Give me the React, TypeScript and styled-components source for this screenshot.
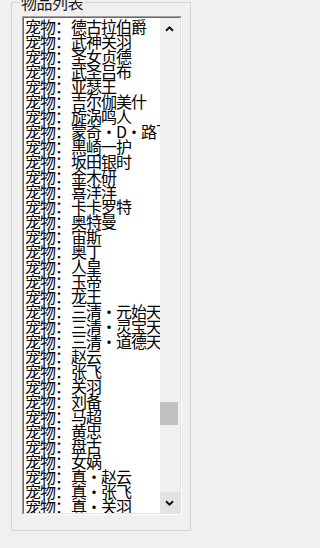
import React from "react";
import styled, { createGlobalStyle } from "styled-components";

const pets = [
  "德古拉伯爵",
  "武神关羽",
  "圣女贞德",
  "武圣吕布",
  "亚瑟王",
  "吉尔伽美什",
  "旋涡鸣人",
  "蒙奇・D・路飞",
  "黑崎一护",
  "坂田银时",
  "金木研",
  "喜洋洋",
  "卡卡罗特",
  "奥特曼",
  "宙斯",
  "奥丁",
  "人皇",
  "玉帝",
  "龙王",
  "三清・元始天尊",
  "三清・灵宝天尊",
  "三清・道德天尊",
  "赵云",
  "张飞",
  "关羽",
  "刘备",
  "马超",
  "黄忠",
  "盘古",
  "女娲",
  "真・赵云",
  "真・张飞",
  "真・关羽",
];

const GlobalStyle = createGlobalStyle`
  html, body {
    margin: 0;
    padding: 0;
    background: #f0f0f0;
    overflow: hidden;
  }
  body {
    font-family: "Noto Sans CJK SC", "Liberation Sans", sans-serif;
  }
`;

const Page = styled.div`
  width: 200px;
  height: 548px;
  padding-left: 11px;
  box-sizing: border-box;
`;

const Group = styled.fieldset`
  box-sizing: border-box;
  width: 180px;
  margin: -5px 0 0 0;
  padding: 6px 8px 15px 10px;
  border: 1px solid #d5d5d5;
  min-width: 0;
`;

const Title = styled.legend`
  margin-left: -2px;
  padding: 0 2px 0 1px;
  font-size: 16px;
  letter-spacing: -0.5px;
  line-height: 15px;
  color: #1a1a1a;
  background: #f0f0f0;
`;

const ListBox = styled.div`
  display: flex;
  width: 160px;
  height: 499px;
  box-sizing: border-box;
  border-style: solid;
  border-width: 1px;
  border-color: #a0a0a0 #ffffff #ffffff #a0a0a0;
  background: #ffffff;
`;

const Inner = styled.div`
  display: flex;
  flex: 1;
  min-width: 0;
  border-style: solid;
  border-width: 1px;
  border-color: #696969 #e3e3e3 #e3e3e3 #696969;
`;

const Items = styled.ul`
  flex: 1;
  min-width: 0;
  margin: 0;
  padding: 1px 0 0 1px;
  list-style: none;
  overflow: hidden;
`;

const Item = styled.li`
  display: flex;
  white-space: nowrap;
  font-size: 16px;
  letter-spacing: -1px;
  line-height: 15px;
  height: 15px;
  color: #000;
`;

const Label = styled.span`
  flex: none;
  width: 46px;
`;

const Name = styled.span``;

const ScrollBar = styled.div`
  flex: none;
  width: 20px;
  display: flex;
  flex-direction: column;
  background: #f0f0f0;
`;

const ArrowButton = styled.div<{ $hover?: boolean }>`
  flex: none;
  height: 21px;
  display: flex;
  align-items: center;
  justify-content: center;
  padding-right: 1px;
  background: ${(p) => (p.$hover ? "#e3e3e3" : "#f0f0f0")};
`;

const Track = styled.div`
  flex: 1;
  display: flex;
  flex-direction: column;
`;

const Thumb = styled.div`
  height: 23px;
  margin-right: 2px;
  background: #c1c1c1;
`;

const Chevron = ({ down }: { down?: boolean }) => (
  <svg width="9" height="6" viewBox="0 0 9 6">
    <path
      d={down ? "M1 1.2 L4.5 4.6 L8 1.2" : "M1 4.8 L4.5 1.4 L8 4.8"}
      fill="none"
      stroke="#111"
      strokeWidth="2"
    />
  </svg>
);

export default function App() {
  // thumb offset from the top of the track, in px
  const thumbTop = 363;
  return (
    <>
      <GlobalStyle />
      <Page>
        <Group>
          <Title>物品列表</Title>
          <ListBox>
            <Inner>
              <Items>
                {pets.map((name) => (
                  <Item key={name}>
                    <Label>宠物：</Label>
                    <Name>{name}</Name>
                  </Item>
                ))}
              </Items>
              <ScrollBar>
                <ArrowButton>
                  <Chevron />
                </ArrowButton>
                <Track>
                  <Thumb style={{ marginTop: thumbTop }} />
                </Track>
                <ArrowButton $hover>
                  <Chevron down />
                </ArrowButton>
              </ScrollBar>
            </Inner>
          </ListBox>
        </Group>
      </Page>
    </>
  );
}
